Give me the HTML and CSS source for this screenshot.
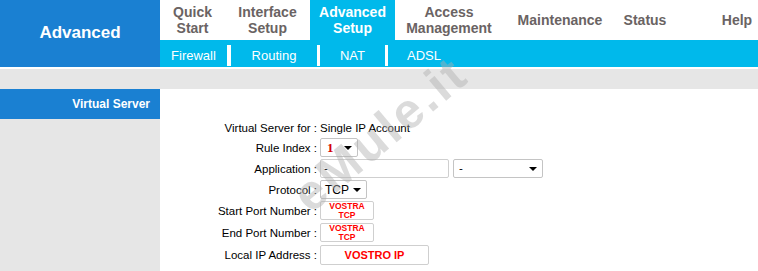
FILE: index.html
```html
<!DOCTYPE html>
<html lang="it">
<head>
  <meta charset="UTF-8" />
  <meta name="viewport" content="width=device-width, initial-scale=1.0" />
  <title>Advanced - Virtual Server</title>
  <link rel="stylesheet" href="styles.css">
</head>
<body>
  <div class="header">
    <div class="brand">Advanced</div>
    <div class="menus">
      <div class="topnav">
        <div class="tab tab-quick">Quick<br>Start</div>
        <div class="tab tab-iface">Interface<br>Setup</div>
        <div class="tab tab-adv active">Advanced<br>Setup</div>
        <div class="tab tab-access">Access<br>Management</div>
        <div class="tab tab-maint">Maintenance</div>
        <div class="tab tab-status">Status</div>
        <div class="tab tab-help">Help</div>
      </div>
      <div class="subnav">
        <div class="sub sub-fw">Firewall</div>
        <div class="sep sep-wide"></div>
        <div class="sub sub-rt">Routing</div>
        <div class="sep"></div>
        <div class="sub sub-nat">NAT</div>
        <div class="sep"></div>
        <div class="sub sub-adsl">ADSL</div>
      </div>
    </div>
  </div>

  <div class="graybar"></div>

  <div class="main">
    <div class="side">
      <div class="side-title">Virtual Server</div>
    </div>
    <div class="content">
      <div class="form">
        <div class="lbl">Virtual Server for :</div>
        <div class="val">Single IP Account</div>

        <div class="lbl">Rule Index :</div>
        <div class="val">
          <div class="box sel sel-rule"><span class="red-num">1</span><span class="arrow"></span></div>
        </div>

        <div class="lbl">Application :</div>
        <div class="val">
          <div class="box inp inp-app">-</div>
          <div class="box sel sel-app">-<span class="arrow"></span></div>
        </div>

        <div class="lbl">Protocol :</div>
        <div class="val">
          <div class="box sel sel-proto">TCP<span class="arrow"></span></div>
        </div>

        <div class="lbl">Start Port Number :</div>
        <div class="val">
          <div class="box inp inp-port"><span class="red-small">VOSTRA<br>TCP</span></div>
        </div>

        <div class="lbl">End Port Number :</div>
        <div class="val">
          <div class="box inp inp-port"><span class="red-small">VOSTRA<br>TCP</span></div>
        </div>

        <div class="lbl">Local IP Address :</div>
        <div class="val">
          <div class="box inp inp-ip"><span class="red-ip">VOSTRO IP</span></div>
        </div>
      </div>
    </div>
  </div>

  <div class="watermark">eMule.it</div>
</body>
</html>
```

FILE: styles.css
```css
body {
  margin: 0;
  font-family: "Liberation Sans", Arial, sans-serif;
  background: #fff;
  color: #000;
  width: 758px;
  height: 271px;
  overflow: hidden;
  position: relative;
}
.header {
  display: flex;
  height: 67px;
}
.brand {
  width: 160px;
  flex-shrink: 0;
  background: #1a80d2;
  color: #fff;
  font-weight: bold;
  font-size: 17px;
  display: flex;
  align-items: center;
  justify-content: center;
  padding-bottom: 1px;
  box-sizing: border-box;
}
.menus {
  flex: 1;
  min-width: 0;
  overflow: hidden;
  display: flex;
  flex-direction: column;
}
.topnav {
  display: flex;
  height: 40px;
  white-space: nowrap;
}
.tab {
  display: flex;
  align-items: center;
  justify-content: center;
  text-align: center;
  font-weight: bold;
  font-size: 14px;
  line-height: 16px;
  color: #6a6363;
  flex-shrink: 0;
}
.tab.active {
  background: #00b9eb;
  color: #fff;
}
.tab-quick { width: 65px; }
.tab-iface { width: 85px; }
.tab-adv { width: 85px; }
.tab-access { width: 108px; }
.tab-maint { width: 114px; }
.tab-status { width: 56px; }
.tab-help { width: 128px; }
.subnav {
  display: flex;
  height: 27px;
  background: #00b9eb;
}
.sub {
  color: #fff;
  font-size: 13px;
  display: flex;
  align-items: center;
  justify-content: center;
  padding-top: 3px;
  box-sizing: border-box;
  flex-shrink: 0;
}
.sub-fw { width: 67px; }
.sub-rt { width: 86px; }
.sub-nat { width: 65px; }
.sub-adsl { padding-left: 19px; }
.sep {
  width: 3px;
  flex-shrink: 0;
  background: #fff;
  margin-top: 5px;
  margin-bottom: 1px;
}
.sep-wide { width: 4px; }
.graybar {
  height: 20px;
  margin-top: 2px;
  background: #e6e6e6;
}
.main {
  display: flex;
  height: 182px;
}
.side {
  width: 160px;
  flex-shrink: 0;
  background: #e6e6e6;
}
.side-title {
  height: 30px;
  background: #1a80d2;
  color: #fff;
  font-weight: bold;
  font-size: 12px;
  display: flex;
  align-items: center;
  justify-content: flex-end;
  padding-right: 10px;
}
.content {
  flex: 1;
  padding-top: 29px;
}
.form {
  display: grid;
  grid-template-columns: 157px auto;
  grid-template-rows: 20px 21px 21px 21px 22px 22px 21px;
  column-gap: 3px;
  font-size: 11.5px;
}
.lbl {
  text-align: right;
  line-height: 20px;
  white-space: nowrap;
}
.val {
  display: flex;
  gap: 4px;
  line-height: 20px;
}
.box {
  box-sizing: border-box;
  border: 1px solid #cfcfcf;
  border-radius: 2px;
  background: #fff;
  height: 19px;
  display: flex;
  align-items: center;
  position: relative;
  line-height: 1;
}
.sel {
  border-color: #c4c4c4;
  padding-left: 4px;
}
.inp {
  padding-left: 3px;
}
.sel-rule { width: 38px; padding-left: 6px; }
.inp-app { width: 129px; }
.sel-app { width: 90px; padding-left: 5px; }
.sel-proto { width: 47px; font-size: 12px; }
.inp-port {
  width: 54px;
  justify-content: center;
  padding-left: 0;
}
.inp-ip {
  width: 109px;
  height: 20px;
  justify-content: center;
  padding-left: 0;
}
.arrow {
  position: absolute;
  right: 5px;
  top: 7px;
  width: 0;
  height: 0;
  border-left: 4px solid transparent;
  border-right: 4px solid transparent;
  border-top: 4px solid #000;
}
.red-num {
  color: #d40000;
  font-family: "Liberation Serif", "Times New Roman", serif;
  font-weight: bold;
  font-size: 13px;
}
.red-small {
  color: #f00;
  font-weight: bold;
  font-size: 8.5px;
  line-height: 9px;
  text-align: center;
}
.red-ip {
  color: #f00;
  font-weight: bold;
  font-size: 11px;
}
.watermark {
  position: absolute;
  left: 380px;
  top: 134px;
  transform: translate(-50%, -50%) rotate(-40deg);
  font-weight: bold;
  font-size: 50px;
  letter-spacing: 3px;
  color: rgba(175, 175, 175, 0.45);
  white-space: nowrap;
  pointer-events: none;
}
```
